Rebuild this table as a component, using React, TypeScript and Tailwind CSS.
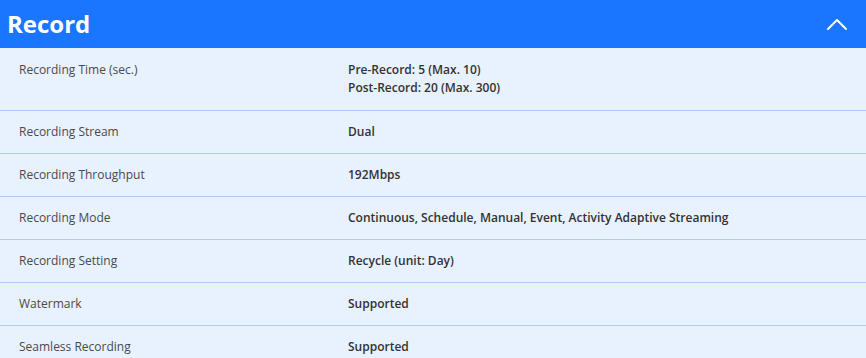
const rows: { label: string; value: string[] }[] = [
  { label: "Recording Time (sec.)", value: ["Pre-Record: 5 (Max. 10)", "Post-Record: 20 (Max. 300)"] },
  { label: "Recording Stream", value: ["Dual"] },
  { label: "Recording Throughput", value: ["192Mbps"] },
  { label: "Recording Mode", value: ["Continuous, Schedule, Manual, Event, Activity Adaptive Streaming"] },
  { label: "Recording Setting", value: ["Recycle (unit: Day)"] },
  { label: "Watermark", value: ["Supported"] },
  { label: "Seamless Recording", value: ["Supported"] },
];

function ChevronUp() {
  return (
    <svg width="22" height="14" viewBox="0 0 22 14" fill="none" stroke="white" strokeWidth="2" strokeLinecap="round" strokeLinejoin="round">
      <path d="M2 12 L11 3 L20 12" />
    </svg>
  );
}

export default function App() {
  return (
    <div className="w-[866px] h-[358px] overflow-hidden bg-[#e8f1fe] font-['Open_Sans',sans-serif]">
      {/* Section header */}
      <div className="h-12 bg-[#1a75ff] flex items-center justify-between pl-[7px] pr-[18px]">
        <h2 className="text-[24px] font-bold text-white leading-none">Record</h2>
        <ChevronUp />
      </div>

      {/* Spec rows */}
      <div>
        {rows.map((row, i) => (
          <div
            key={row.label}
            className={`flex border-b border-[#a9cdf8] text-[12px] leading-[18px] ${i === 0 ? "py-[13px]" : "py-3"}`}
          >
            <div className="w-[348px] pl-[19px] text-[#4a4a4a] shrink-0">{row.label}</div>
            <div className="font-semibold text-[#333333]">
              {row.value.map((v) => (
                <div key={v}>{v}</div>
              ))}
            </div>
          </div>
        ))}
      </div>
    </div>
  );
}
